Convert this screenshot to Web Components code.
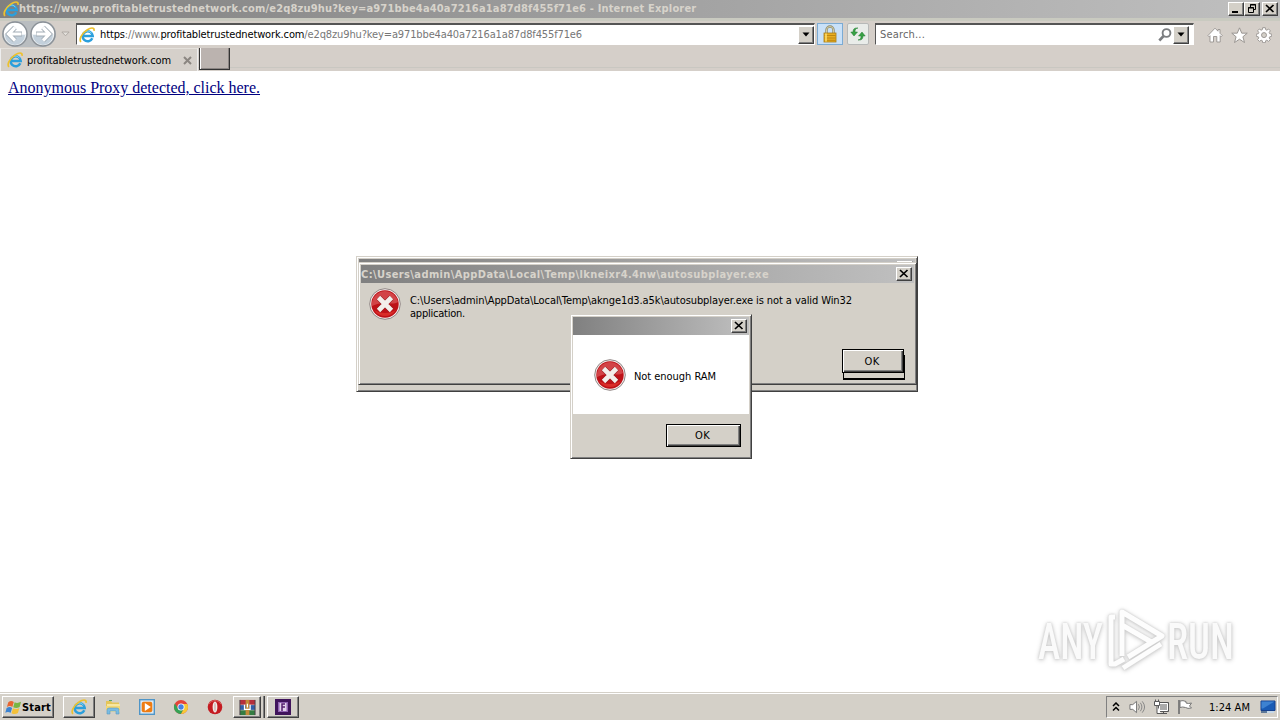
<!DOCTYPE html>
<html lang="en"><head><meta charset="utf-8"><title>Internet Explorer</title>
<style>
html,body{margin:0;width:1280px;height:720px;overflow:hidden;background:#fff}
body{font:11px "DejaVu Sans Condensed","DejaVu Sans",sans-serif;font-stretch:condensed;color:#000}
</style></head><body>
<desk-top></desk-top>
<script>
const define=(name,html,setup)=>customElements.define(name,class extends HTMLElement{
  constructor(){super();this.attachShadow({mode:'open'})}
  connectedCallback(){
    const t=document.createElement('template');
    t.innerHTML='<style>:host{display:block;box-sizing:border-box}*{box-sizing:border-box}svg{display:block}</style>'+(typeof html==='function'?html(this):html);
    this.shadowRoot.replaceChildren(t.content.cloneNode(true));
    if(setup)setup(this);
  }
});

const icons={
ie:['0 0 16 16','<path d="M13.300 11.300A5 5 0 1 1 13.700 8.900H4.500" fill="none" stroke="#2b9fdc" stroke-width="2.500"/><path d="M4 6.500A5 5 0 0 1 12.500 6.300" fill="none" stroke="#8fdcf7" stroke-width="1"/><path d="M2.200 14.800C-.6 13.500 2.500 6.500 8 3C11.500.6 15.600-.2 15 3.800" fill="none" stroke="#edc12e" stroke-width="1.700"/>'],
back:['0 0 26 26','<circle cx="13" cy="13" r="12" fill="#eef2f5" stroke="#8b9197" stroke-width="1.500"/><path d="M2 13a11 11 0 0 1 22 0z" fill="#fff"/><path d="M3 14h20a10 10 0 0 1-20 0z" fill="#c3d0db"/><path d="M13 6.500 6.500 13l6.500 6.500M7.500 13h12.500" fill="none" stroke="#a2acb5" stroke-width="5"/><path d="M13 6.500 6.500 13l6.500 6.500M7.500 13h12" fill="none" stroke="#fff" stroke-width="3.200"/>'],
down:['0 0 8 5','<path d="M.5.500h7L4 4.500z" fill="#000"/>'],
hollow:['0 0 10 6','<path d="M1 .8h8L5 5z" fill="#e4e1dc" stroke="#aaa59f"/>'],
lock:['0 0 16 18','<path d="M4.500 9V5a3.500 3.500 0 0 1 7 0v4" fill="none" stroke="#8c8a70" stroke-width="2.400"/><path d="M4.500 9V5a3.500 3.500 0 0 1 7 0v4" fill="none" stroke="#e7deb0" stroke-width=".8"/><rect x="2" y="8" width="12" height="9" fill="#e9ae22" stroke="#a67b16" stroke-width=".8"/><path d="M2.500 10.500h11M2.500 13h11M2.500 15.300h11" stroke="#b9830e" stroke-width=".9"/><path d="M4 8.500v8" stroke="#ffe070" stroke-width="1.500"/>'],
refresh:['0 0 16 16','<path d="M8 2C5.500 2.500 5 4 5 6H7.500L4 10 .8 6H3C3 3 4.500 1.500 8 2z" fill="#38a145" stroke="#237c32" stroke-width=".5"/><path d="M8 14c2.500-.5 3-2 3-4H8.500L12 6l3.200 4H13c0 3-1.500 4.500-5 4z" fill="#38a145" stroke="#237c32" stroke-width=".5"/>'],
mag:['0 0 14 14','<circle cx="8.500" cy="5" r="3.900" fill="none" stroke="#7b7d80" stroke-width="1.900"/><path d="M5.600 8 1.300 12.500" stroke="#7b7d80" stroke-width="2.600"/>'],
home:['0 0 16 16','<path d="M1 8.500 8 1.200l3 3V2.500h2v3.800l2.200 2.200-1 1.200-1-1V15H9.800V9.500H6.500V15H3V8.700l-1 1z" fill="#fff" stroke="#96928e" stroke-width=".9"/>'],
star:['0 0 16 16','<path d="m8 .8 2.100 5h5.200l-4.100 3.400 1.500 5.400L8 11.500l-4.700 3.100 1.500-5.400L.7 5.800h5.200z" fill="#fff" stroke="#96928e" stroke-width=".9"/>'],
gear:['0 0 16 16','<g fill="#fff" stroke="#96928e" stroke-width=".9"><path d="m6.700.7h2.600l.4 2 1.100.5 1.800-1.200 1.700 1.800-1.100 1.700.5 1.200 2 .4v2.200l-2 .5-.5 1.100 1.100 1.700-1.700 1.800-1.800-1.200-1.100.5-.4 2H6.700l-.4-2-1.200-.5-1.700 1.200-1.800-1.800 1.200-1.700-.5-1.100-2-.5V7.100l2-.4.500-1.200-1.200-1.700L3.400 2l1.700 1.200 1.200-.5z"/><circle cx="8" cy="8.100" r="2.500" fill="#d4d0c8"/></g>'],
close:['0 0 10 9','<path d="M1 1l7.500 7M8.500 1 1 8" stroke="#000" stroke-width="1.700"/>'],
min:['0 0 10 9','<path d="M1 8h6" stroke="#000" stroke-width="2"/>'],
restore:['0 0 10 9','<path d="M3.500 3V.500h5v5H6.500M3 1h6M1.500 3.500h5v5h-5zM1 4h6" fill="none" stroke="#000"/>'],
error:['0 0 32 32','<circle cx="16" cy="16" r="15.300" fill="#f5eeee" stroke="#8f8584"/><circle cx="16" cy="16" r="13.700" fill="#bd1118"/><path d="M3 14a13.200 13.200 0 0 1 26 0C23 18 14 12 3 18z" fill="#d24347"/><path d="M5 22a13 13 0 0 0 22 0c-7 4-15 4-22 0z" fill="#d92c29"/><path d="m9.500 9.500 13 13M22.500 9.500l-13 13" stroke="#8f1217" stroke-width="5.800"/><path d="m9.500 9.500 13 13M22.500 9.500l-13 13" stroke="#f3eeeb" stroke-width="4.800"/>'],
win:['0 0 18 18','<path d="M3.500 3.500Q6.500 1 9.300 3.200L7.800 8.400Q5 6.500 2 8.500z" fill="#e76632"/><path d="M10.200 3.500Q13 5 17 3L15.500 8.500Q12 10.500 8.700 8.700z" fill="#78b644"/><path d="M1.700 9.500Q5 7.500 7.500 9.400L6 14.600Q3 12.700.3 14.600z" fill="#3b83d2"/><path d="M8.400 9.700Q12 11.500 15.200 9.600L13.700 14.800Q10.500 17 6.900 15z" fill="#f4c13a"/>'],
folder:['0 0 16 16','<path d="M1 2h5l1 1.500h7V9H1z" fill="#e4c558"/><path d="M2 5h13v8H2z" fill="#f7e6a0"/><path d="M1 7h14v4H1z" fill="#f2d875"/><path d="M2 15v-4q0-2 2-2h8q2 0 2 2v4h-3v-3H5v3z" fill="#79bce3" stroke="#5797bf" stroke-width=".6"/><path d="M4 1.500h3" stroke="#56a56b"/>'],
media:['0 0 16 16','<rect x=".7" y=".7" width="14.600" height="14.600" fill="#dceaf4" stroke="#4f95c7" stroke-width="1.400"/><rect x="2.700" y="2.700" width="10.600" height="10.600" rx="2" fill="#ee7c13"/><path d="m5.800 4 6 4-6 4z" fill="#fff"/>'],
chrome:['0 0 16 16','<circle cx="8" cy="8" r="7" fill="#e4443a"/><path d="M1.900 4.500A7 7 0 0 0 8 15l3-5.500-3-1.500-3 1.500z" fill="#35a255"/><path d="M8 5h6.300A7 7 0 0 1 8 15l3-5.500z" fill="#f7ca37"/><circle cx="8" cy="8" r="3.500" fill="#fff"/><circle cx="8" cy="8" r="2.700" fill="#4681e3"/>'],
opera:['0 0 16 16','<circle cx="8" cy="8" r="7.300" fill="#c41b21"/><path d="M2 5a7 7 0 0 1 12 0" fill="none" stroke="#dc6462"/><ellipse cx="8" cy="8" rx="2.400" ry="5.500" fill="#f3eae7"/><ellipse cx="8" cy="8" rx="1" ry="4.500" fill="#d6c4c0"/>'],
rar:['0 0 18 18','<path d="M1 1h16v5H1z" fill="#b52e3c"/><path d="M1 6.500h16v5H1z" fill="#315da9"/><path d="M1 12h16v5H1z" fill="#347d42"/><path d="M1 1v16M17 1v16" stroke="#493d46"/><path d="M7 1h4v16H7z" fill="#c38b38"/><path d="M5.800 6v5h6V6M8.900 5v4" fill="none" stroke="#fff" stroke-width="1.300"/>'],
purple:['0 0 16 16','<path d="M0 0h16v16H0z" fill="#40145b"/><path d="M3 3h10v10H3z" fill="#9163b2"/><path d="M4.500 4h7v8h-7z" fill="#e3d3eb"/><path d="M7 12V5h3M7 8h3" fill="none" stroke="#572170" stroke-width="1.500"/>'],
up:['0 0 8 10','<path d="m1 4 3-3 3 3M1 8.500l3-3 3 3" fill="none" stroke="#000" stroke-width="1.500"/>'],
speaker:['0 0 18 16','<path d="M1 5.500h3L8 2v12l-4-3.500H1z" fill="#fff" stroke="#737373"/><path d="M10 5q2 3 0 6M12 3.500q3.300 4.500 0 9M14 2q5 6 0 12" fill="none" stroke="#848484" stroke-width="1"/>'],
network:['0 0 17 16','<path d="M5.500 3.500h10v9h-10zM8 14.500h6M10.500 12.500v2" fill="#a9a9a9" stroke="#555"/><path d="M6.500 4.500h8v7h-8z" fill="#aaa" stroke="#fff"/><path d="M1.500 2.500h5v4h-5zM2.500 2.500v-2M5.500 2.500v-2M4 6.500v8h4" fill="#fff" stroke="#595959"/>'],
flag:['0 0 16 16','<path d="M2 1v14" stroke="#777" stroke-width="1.800"/><path d="M3 2q3-1 6 .5v1.500q2.500 1 5.500 0l-2 3 2 2q-4 1-6-.5-3-1-5.500 0z" fill="#fff" stroke="#777"/>'],
monitor:['0 0 16 14','<path d="M1 1h14v9.500H1z" fill="#195bb5" stroke="#17418c"/><path d="M1.500 1.500h13L3 8.500H1.500z" fill="#3d82d1"/><path d="M4 11h10v2H6z" fill="#c6d8e8"/><path d="M1 12h6" stroke="#375a84" stroke-width="1.500"/>']
};
define('ui-icon',e=>{const d=icons[e.getAttribute('name')];return `<style>:host{flex:none;width:${e.getAttribute('w')||16}px;height:${e.getAttribute('h')||16}px}svg{width:100%;height:100%}:host([flip]){transform:scaleX(-1)}</style><svg viewBox="${d[0]}">${d[1]}</svg>`});

/* A single-line label whose tracking is adjusted to a given advance width. */
define('fit-text','<style>:host{flex:none;white-space:pre;line-height:13px}span{display:inline-block}</style><span><slot></slot></span>',e=>{
  const s=e.shadowRoot.querySelector('span'),w=+e.getAttribute('w');
  if(w)s.style.letterSpacing=((w-s.getBoundingClientRect().width)/e.textContent.length)+'px';
});
define('push-button',`<style>:host{display:flex;flex:none;align-items:center;justify-content:center;background:#d4d0c8;border:1px solid;border-color:#fff #404040 #404040 #fff;box-shadow:inset -1px -1px #808080}
:host([default]){border-color:#000;box-shadow:inset 1px 1px #fff,inset -1px -1px #404040,inset -2px -2px #808080}</style><slot></slot>`);
define('caption-button',e=>`<style>:host{width:${e.getAttribute('w')||16}px;height:${e.getAttribute('h')||14}px;flex:none}push-button{width:100%;height:100%}</style><push-button><ui-icon name="${e.getAttribute('icon')}" w="10" h="9"></ui-icon></push-button>`);

define('title-bar',`<style>:host{display:flex;height:18px;background:linear-gradient(90deg,#808080,#c0c0c0);padding:0 2px 0 3px;align-items:center;color:#d7d3cb;font-weight:bold}fit-text{flex:1;margin-top:-1px}nav{display:flex;margin-top:-1px}caption-button:last-child{margin-left:2px}</style>
<ui-icon name="ie"></ui-icon><fit-text w="677">https://www.profitabletrustednetwork.com/e2q8zu9hu?key=a971bbe4a40a7216a1a87d8f455f71e6 - Internet Explorer</fit-text><nav><caption-button icon="min"></caption-button><caption-button icon="restore"></caption-button><caption-button icon="close"></caption-button></nav>`);

define('address-bar',`<style>:host{display:flex;height:30px;background:#d5cfc9;padding:3px 8px 4px 2px;align-items:center;border-top:3px solid #c9cac0}
.nav{display:flex;gap:2px;background:#b9bdc0;border-radius:13px;width:54px;margin-top:-1px}.hollow{margin:0 7px 0 5px}
.field{display:flex;align-items:center;height:22px;background:#fff;border:1px solid;border-color:#555 #fff #fff #555;border-width:2px 1px 1px 1px}
.url{width:739px;padding-left:2px;margin-left:-1px}.url fit-text{margin-left:5px;flex:1}.grey{color:#777}.field push-button{width:16px;height:18px}
.tool{width:26px;height:22px;display:grid;place-items:center;background:#c9e1f8;border:1px solid #7babd4;margin-left:2px}.ref{width:22px;margin-left:4px;background:#e9ece9;border-color:#b7b9b8;border-radius:2px}
.search{width:319px;margin-left:6px;padding:0 4px 0 4px;color:#666}.search fit-text{flex:1}.search push-button{margin-left:1px}.icons{display:flex;gap:8px;margin:3px 0 0 auto}</style>
<div class="nav"><ui-icon name="back" w="26" h="26"></ui-icon><ui-icon name="back" w="26" h="26" flip></ui-icon></div><ui-icon class="hollow" name="hollow" w="9" h="6"></ui-icon>
<div class="field url"><ui-icon name="ie"></ui-icon><fit-text w="482"><span>https<span class="grey">://www.</span>profitabletrustednetwork.com<span class="grey">/e2q8zu9hu?key=a971bbe4a40a7216a1a87d8f455f71e6</span></span></fit-text><push-button><ui-icon name="down" w="8" h="5"></ui-icon></push-button></div>
<div class="tool"><ui-icon name="lock" w="16" h="18"></ui-icon></div><div class="tool ref"><ui-icon name="refresh"></ui-icon></div>
<div class="field search"><fit-text w="45">Search...</fit-text><ui-icon name="mag" w="14" h="14"></ui-icon><push-button><ui-icon name="down" w="8" h="5"></ui-icon></push-button></div>
<div class="icons"><ui-icon name="home"></ui-icon><ui-icon name="star" w="17" h="17"></ui-icon><ui-icon name="gear"></ui-icon></div>`);

define('tab-strip',`<style>:host{display:flex;height:23px;background:linear-gradient(#d5cfc9 19px,#c9c7c1 19px 20px,#d5cfc9 20px)}
.tab{display:flex;align-items:center;width:198px;padding:0 5px 0 6px;background:#d5d0ca;border-left:1px solid #eee;border-top:1px solid #e4e1dc;border-right:1px solid #eee}.tab fit-text{margin-left:4px;flex:1}
.new{width:31px;height:22px;background:#bbb3af;border:1px solid #333;border-width:0 1px 1px 1px;box-shadow:inset 1px 0 #fff,inset -1px -1px #8b8583;margin-left:1px}svg{width:9px;height:9px}</style>
<div class="tab"><ui-icon name="ie"></ui-icon><fit-text w="144">profitabletrustednetwork.com</fit-text><svg viewBox="0 0 9 9"><path d="m1 1 7 7M8 1 1 8" stroke="#8b8681" stroke-width="2"/></svg></div><div class="new"></div>`);

define('web-page',`<style>:host{flex:1;background:#fff;padding:7px 8px;font:16px/19px "Liberation Serif",serif}a{color:#000080;text-decoration:underline}fit-text{line-height:19px}</style><fit-text w="252"><a>Anonymous Proxy detected, click here.</a></fit-text>`);

define('task-bar',`<style>:host{display:flex;height:28px;background:#d4d0c8;border-top:1px solid #d4d0c8;box-shadow:inset 0 1px #fff;padding:3px 2px 2px;align-items:stretch}
.start{width:52px;font-weight:bold}.app{width:32px}.ie{margin-left:9px}.plain{display:flex;align-items:center;gap:18px;margin:0 10px}.rar{width:28px}.stack{width:4px;border-right:1px solid #404040;box-shadow:inset -1px 0 #808080}.purple{margin-left:2px}
.tray{display:flex;align-items:center;margin-left:auto;width:172px;border:1px solid;border-color:#808080 #fff #fff #808080;padding:0 1px 0 5px}.sp{margin-left:9px}.net,.flag{margin-left:7px}.clock{margin-left:16px}.mon{margin-left:auto}</style>
<push-button class="start"><ui-icon name="win" w="17" h="17"></ui-icon><fit-text w="29">Start</fit-text></push-button>
<push-button class="app ie"><ui-icon name="ie"></ui-icon></push-button>
<div class="plain"><ui-icon name="folder"></ui-icon><ui-icon name="media"></ui-icon><ui-icon name="chrome"></ui-icon><ui-icon name="opera"></ui-icon></div>
<push-button class="rar"><ui-icon name="rar" w="17" h="17"></ui-icon></push-button><div class="stack"></div><push-button class="app purple"><ui-icon name="purple"></ui-icon></push-button>
<div class="tray"><ui-icon name="up" w="8" h="10"></ui-icon><ui-icon class="sp" name="speaker" w="17"></ui-icon><ui-icon class="net" name="network" w="17"></ui-icon><ui-icon class="flag" name="flag"></ui-icon><fit-text class="clock" w="41">1:24 AM</fit-text><ui-icon class="mon" name="monitor" w="16" h="14"></ui-icon></div>`);

define('dialog-window',e=>`<style>:host{display:flex;flex-direction:column;position:absolute;background:#d4d0c8;border:1px solid;border-color:#d4d0c8 #404040 #404040 #d4d0c8;box-shadow:inset 1px 1px #fff,inset -1px -1px #808080;padding:2px}
header{display:flex;align-items:center;height:18px;flex:none;background:linear-gradient(90deg,#808080,#c0c0c0);color:#d7d3cb;font-weight:bold;padding:0 2px 0 0}fit-text{flex:1}caption-button{margin-top:-1px}section{flex:1;display:flex;flex-direction:column;min-height:0}</style>
<header><fit-text w="${e.getAttribute('tw')}">${e.getAttribute('caption')}</fit-text><caption-button icon="close"></caption-button></header><section><slot></slot></section>`);

define('any-run',`<style>:host{position:absolute;left:1025px;top:600px;width:250px;height:80px}svg{filter:drop-shadow(0 0 1px #ccc) drop-shadow(0 1px 2px #ccc)}</style>
<svg width="250" height="80" fill="none" stroke="#fdfdfd"><g font-family="Roboto" font-size="50" font-weight="500" fill="#fafafa" stroke="none"><text x="13" y="59" textLength="65" lengthAdjust="spacingAndGlyphs">ANY</text><text x="142" y="59" textLength="67" lengthAdjust="spacingAndGlyphs">RUN</text></g><path d="M97 56V12l40 24-34 21M97 25l31 18M90 17h-4v47h4l9-5M98 68l38-24" stroke-width="5" stroke-linejoin="round"/></svg>`);

define('desk-top',`<style>:host{display:flex;flex-direction:column;width:1280px;height:720px;position:relative;overflow:hidden}
.back{left:356px;top:256px;width:562px;height:136px}.front{left:358px;top:262px;width:559px;height:123px}.ram{left:570px;top:314px;width:182px;height:145px}
.msg{display:flex;padding:5px 8px;gap:9px}.lines{padding-top:6px}
.ok1{width:62px;height:24px;align-self:flex-end;margin:auto 10px 9px;position:relative}
.ghost{position:absolute;left:843px;top:355px;width:62px;height:25px;border:1px solid #000;border-width:1px 1px 2px 1px}
.cover{position:absolute;left:842px;top:349px}
.white{display:flex;height:79px;background:#fff;align-items:center;padding:0 0 0 21px;gap:8px}.white fit-text{margin-top:3px}.ok2{width:75px;height:23px;align-self:flex-end;margin:10px 8px 0}.ok2 fit-text,.cover fit-text{margin-left:-2px}.cover{width:62px;height:24px}</style>
<title-bar></title-bar><address-bar></address-bar><tab-strip></tab-strip><web-page></web-page><task-bar></task-bar>
<any-run></any-run>
<dialog-window class="back" caption="" tw="0"></dialog-window>
<dialog-window class="front" caption="C:\\Users\\admin\\AppData\\Local\\Temp\\lkneixr4.4nw\\autosubplayer.exe" tw="408"><div class="msg"><ui-icon name="error" w="32" h="32"></ui-icon><div class="lines"><fit-text w="442">C:\\Users\\admin\\AppData\\Local\\Temp\\aknge1d3.a5k\\autosubplayer.exe is not a valid Win32</fit-text><fit-text w="55">application.</fit-text></div></div></dialog-window>
<div class="ghost"></div><push-button class="cover" default><fit-text w="15">OK</fit-text></push-button>
<dialog-window class="ram" caption="" tw="0"><div class="white"><ui-icon name="error" w="32" h="32"></ui-icon><fit-text w="82">Not enough RAM</fit-text></div><push-button class="ok2" default><fit-text w="15">OK</fit-text></push-button></dialog-window>`);
</script></body></html>
